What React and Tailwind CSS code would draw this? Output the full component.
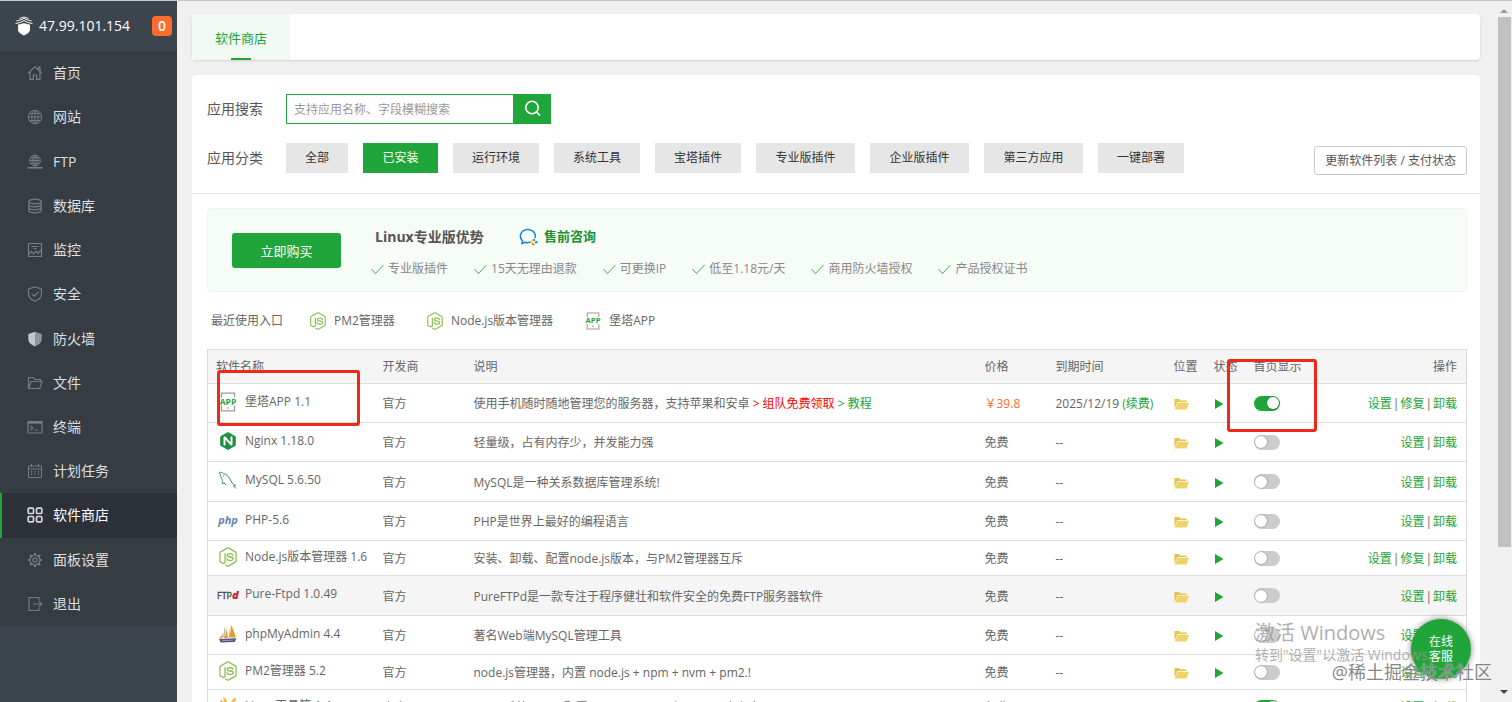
import { useState } from "react";
import { FaNodeJs } from "react-icons/fa";
import { SiNginx } from "react-icons/si";

const stroke = { fill: "none", stroke: "currentColor", strokeWidth: 1.2 };

// Sidebar icons, all on a 16x16 grid
const menuIcons = {
  home: <path {...stroke} d="M1 8.2 8 1.8l7 6.4M3 7v7.4h3.4V10h3.2v4.4H13V7M11.5 4.600V2.200H13V6" />,
  site: (
    <g {...stroke} strokeWidth={1}>
      <circle cx="8" cy="8" r="6.700" />
      <ellipse cx="8" cy="8" rx="3.200" ry="6.700" />
      <path d="M8 1.300v13.400M1.300 8h13.400M2.400 4.500h11.200M2.400 11.500h11.200" />
    </g>
  ),
  ftp: (
    <g {...stroke} strokeWidth={1}>
      <circle cx="8" cy="6.500" r="5.300" />
      <ellipse cx="8" cy="6.500" rx="2.500" ry="5.300" />
      <path d="M8 1.200v12M2.700 6.500h10.600M3.600 3.800h8.800M3.600 9.200h8.800" />
      <path d="M.5 13.800h15" strokeWidth={1.600} />
    </g>
  ),
  database: (
    <g {...stroke}>
      <ellipse cx="8" cy="3.500" rx="6.200" ry="2.300" />
      <path d="M1.800 3.500v9c0 1.300 2.800 2.300 6.200 2.300s6.200-1 6.200-2.300v-9M1.800 6.500c0 1.300 2.800 2.300 6.200 2.300s6.200-1 6.200-2.300M1.800 9.500c0 1.300 2.800 2.300 6.200 2.300s6.200-1 6.200-2.300" />
    </g>
  ),
  monitor: (
    <g {...stroke}>
      <path d="M1.500 1.500h13v13h-13zM4.500 4.500h7M6.500 6.500h3" />
      <path d="m2 12 2.500-2.500 2 2.500 2.500-3 2 2.500 3-3.500" />
    </g>
  ),
  security: (
    <g {...stroke}>
      <path d="M8 1 14.500 3v5c0 3.500-2.800 5.800-6.500 7.200C4.300 13.800 1.500 11.500 1.500 8V3z" />
      <path d="m4.800 7.700 2.500 2.500 4.200-4.400" />
    </g>
  ),
  firewall: (
    <g>
      <path fill="#c3c7c9" d="M8 .8 1.300 3v5c0 3.500 2.900 5.900 6.700 7.400z" />
      <path fill="#8f9598" d="M8 .8 14.700 3v5c0 3.500-2.900 5.900-6.700 7.400z" />
    </g>
  ),
  files: <path {...stroke} d="M1.500 13.500v-11h4.800L8 4.500h5.500v2M1.500 13.500 4 6.500h11l-2.300 7z" />,
  terminal: (
    <g {...stroke}>
      <path d="M1 2.500h14v11.500H1z" />
      <path d="M1 3.500h14" strokeWidth={2.400} />
      <path d="m3.500 7 2.300 2-2.300 2M7.500 11h3.500" />
    </g>
  ),
  cron: (
    <g {...stroke} strokeWidth={1}>
      <path d="M1.500 3h13v11.500h-13zM1.500 6h13M4.500 1v3M11.500 1v3" />
      <path d="M4.500 8v5M8 8v5M11.500 8v5" strokeDasharray="1.500 1" />
    </g>
  ),
  store: (
    <g {...stroke} strokeWidth={1.700}>
      <rect x="1.200" y="1.200" width="5.300" height="5.300" rx="1" />
      <rect x="9.500" y="1.200" width="5.300" height="5.300" rx="1" />
      <rect x="1.200" y="9.500" width="5.300" height="5.300" rx="1" />
      <rect x="9.500" y="9.500" width="5.300" height="5.300" rx="1" />
    </g>
  ),
  settings: (
    <g {...stroke}>
      <circle cx="8" cy="8" r="5" />
      <circle cx="8" cy="8" r="2.200" />
      <path strokeWidth={2} d="M8 1v2M8 13v2M1 8h2M13 8h2M3 3l1.500 1.500M11.500 11.500 13 13M3 13l1.500-1.500M11.500 4.500 13 3" />
    </g>
  ),
  exit: <path {...stroke} d="M12 4.500v-3H2v13h10v-3M6 8h8.500M12 5.300 14.700 8 12 10.700" />,
};

const menu = [
  { name: "首页", icon: "home" },
  { name: "网站", icon: "site" },
  { name: "FTP", icon: "ftp" },
  { name: "数据库", icon: "database" },
  { name: "监控", icon: "monitor" },
  { name: "安全", icon: "security" },
  { name: "防火墙", icon: "firewall" },
  { name: "文件", icon: "files" },
  { name: "终端", icon: "terminal" },
  { name: "计划任务", icon: "cron" },
  { name: "软件商店", icon: "store" },
  { name: "面板设置", icon: "settings" },
  { name: "退出", icon: "exit" },
];

const categories = [
  { name: "全部", width: "w-[62px]" },
  { name: "已安装", width: "w-[75px]" },
  { name: "运行环境", width: "w-[86px]" },
  { name: "系统工具", width: "w-[86px]" },
  { name: "宝塔插件", width: "w-[86px]" },
  { name: "专业版插件", width: "w-[99px]" },
  { name: "企业版插件", width: "w-[99px]" },
  { name: "第三方应用", width: "w-[99px]" },
  { name: "一键部署", width: "w-[86px]" },
];

const advantages = ["专业版插件", "15天无理由退款", "可更换IP", "低至1.18元/天", "商用防火墙授权", "产品授权证书"];

const software = [
  { name: "堡塔APP 1.1", icon: "app", height: "h-[39px]", desc: "使用手机随时随地管理您的服务器，支持苹果和安卓", price: "￥39.8", expire: "2025/12/19", repair: true, home: true, links: true },
  { name: "Nginx 1.18.0", icon: "nginx", height: "h-[39px]", desc: "轻量级，占有内存少，并发能力强" },
  { name: "MySQL 5.6.50", icon: "mysql", height: "h-10", desc: "MySQL是一种关系数据库管理系统!" },
  { name: "PHP-5.6", icon: "php", height: "h-[39px]", desc: "PHP是世界上最好的编程语言" },
  { name: "Node.js版本管理器 1.6", icon: "node", height: "h-[35px]", desc: "安装、卸载、配置node.js版本，与PM2管理器互斥", repair: true },
  { name: "Pure-Ftpd 1.0.49", icon: "ftpd", height: "h-10", desc: "PureFTPd是一款专注于程序健壮和软件安全的免费FTP服务器软件", active: true },
  { name: "phpMyAdmin 4.4", icon: "pma", height: "h-[39px]", desc: "著名Web端MySQL管理工具" },
  { name: "PM2管理器 5.2", icon: "node", height: "h-[35px]", desc: "node.js管理器，内置 node.js + npm + nvm + pm2.!" },
  { name: "Linux工具箱 1.4", icon: "tools", height: "h-[35px]", desc: "Linux系统工具，配置DNS、Swap、时区、IP、内存盘!", home: true },
];

function SoftIcon({ type, size = "size-5" }) {
  if (type === "node") return <FaNodeJs className={`${size} shrink-0 text-[#8cc152]`} />;
  if (type === "nginx") return <SiNginx className="size-[18px] shrink-0 text-[#1f9040]" />;
  if (type === "app")
    return (
      <svg viewBox="0 0 20 20" className={`${size} shrink-0 overflow-visible`}>
        <path d="M3.500 5.500V1.200h13v4.300M3.500 13.500v5.300h13v-5.300" fill="none" stroke="#999" strokeWidth="1.200" />
        <path d="M9 16h2" stroke="#999" />
        <text x="10" y="12.500" textAnchor="middle" fontSize="8.500" fontWeight="700" fill="#20a53a" fontFamily="Open Sans">APP</text>
      </svg>
    );
  if (type === "mysql")
    return (
      <svg viewBox="0 0 20 20" className="size-5 shrink-0" fill="none" stroke="#3f8296" strokeWidth="1">
        <path d="M4.500 10.500C3 8 2.500 5 1.500 2.500c1.500-.5 3 0 4 1 4 1 6.500 4.500 8 8.500.5 1.500 2.500 2.500 4 3.500l-2 .3 2.500 2.700" />
        <path d="M4.500 10.500c-.5 1.200-.3 2.500.3 3.500l1.200-1.500c.5 1.200 1.200 2 2 2.500M5 5.500l1 .8" />
      </svg>
    );
  if (type === "php")
    return (
      <svg viewBox="0 0 20 20" className="size-5 shrink-0 overflow-visible">
        <text x="10" y="14" textAnchor="middle" fontSize="11" fontWeight="700" fontStyle="italic" fill="#6482b9" fontFamily="Open Sans">php</text>
      </svg>
    );
  if (type === "ftpd")
    return (
      <svg viewBox="0 0 22 20" className="h-5 w-[22px] shrink-0">
        <text x="0" y="15" fontSize="9" fill="#444" stroke="#444" strokeWidth=".3" fontFamily="Open Sans">FTP</text>
        <text x="15" y="15" fontSize="11" fontWeight="800" fontStyle="italic" fill="#d0202a" fontFamily="Open Sans">d</text>
      </svg>
    );
  if (type === "pma")
    return (
      <svg viewBox="0 0 20 20" className="size-5 shrink-0">
        <path fill="#e8992f" d="M8.500 1.500c.5 5-.5 9-3 12.500h4.300zM13 1c2.500 4.500 3.800 8.500 4.800 12.500H11C12.300 9 12.800 5 13 1zM4.800 6c0 3.500-1 6-3.500 8.500h3z" />
        <path fill="#b9b9b9" d="M6 2.500c.5 3 0 7-1.500 10.500l1 .3C8 9.500 8 5 6 2.500zM11.500 3c.5 4 0 7.500-1.200 10.500h.9C12.500 10 12.500 6 11.500 3z" />
        <path fill="#55568c" d="m1 15 17.500-.8-1.800 3.800-14 .6z" />
        <path fill="#aaa" d="m4 16.300 11-.5v.8l-10.500.5z" />
      </svg>
    );
  return (
    <svg viewBox="0 0 20 20" className="size-5 shrink-0" fill="#f5b93a">
      <path d="M3 3.500 5 6l1-2.500L4.500 1.800c2-.5 4 .7 4 3l8 9.500c1 1.700-1 3.500-2.600 2.500L5 8.500C3 8.500 1.800 6 3 3.500z" />
      <path d="m12 7.500 3.500-5L18 2l-.5 2.500-4 4.500zM3 16l5-5 1.800 1.800-4.500 5C4 18.500 2 17.500 3 16z" />
    </svg>
  );
}

function Check() {
  return (
    <svg viewBox="0 0 13 12" className="h-3 w-[13px]" fill="none" stroke="#3fae58">
      <path d="m.5 6 4 4.500 8-8.500" />
    </svg>
  );
}

function SoftRow({ item }) {
  const [home, setHome] = useState(!!item.home);
  const actions = item.repair ? ["设置", "修复", "卸载"] : ["设置", "卸载"];

  return (
    <tr className={`border-y border-[#ddd] ${item.height} ${item.active ? "bg-[#f5f5f5]" : "bg-white"}`}>
      <td className="pb-[3px] pl-2">
        <div className="flex items-center">
          <span className="mr-[5px] flex w-6 justify-center">
            <SoftIcon type={item.icon} />
          </span>
          <span className="whitespace-nowrap">{item.name}</span>
        </div>
      </td>
      <td className="pt-[2px] pl-2">官方</td>
      <td className="truncate pt-[2px] pl-2">
        {item.desc}
        {item.links && (
          <>
            {" "}
            <a href="#team" className="text-[#f00]">&gt; 组队免费领取</a>{" "}
            <a href="#guide" className="text-[#20a53a]">&gt; 教程</a>
          </>
        )}
      </td>
      <td className={`pt-[2px] pl-2 ${item.price ? "text-[#fc6d26]" : ""}`}>{item.price || "免费"}</td>
      <td className="pt-[2px] pl-2 whitespace-nowrap">
        {item.expire || "--"} {item.expire && <a href="#renew" className="text-[#20a53a]">(续费)</a>}
      </td>
      <td className="pt-[2px] pl-2">
        <button aria-label="打开目录" className="block">
          <svg viewBox="0 0 15 12" className="h-3 w-[15px]">
            <path fill="#e6c24c" d="M.5 11V1h4.500l1.300 1.400h6.200V4H3.500z" />
            <path fill="#efd368" d="M3.800 4.800H15L12.500 11.500H.8z" />
          </svg>
        </button>
      </td>
      <td className="pt-[2px] pl-2">
        <button aria-label="运行中" className="block">
          <svg viewBox="0 0 10 10" className="size-[10px]" fill="#20a53a">
            <path d="M1 0v10l8.500-5z" />
          </svg>
        </button>
      </td>
      <td className="pl-2">
        <input
          type="checkbox"
          aria-label={`${item.name} 首页显示`}
          checked={home}
          onChange={(e) => setHome(e.target.checked)}
          className="flex h-[15px] w-[26px] appearance-none items-center rounded-full bg-[#ccc] px-px before:size-3 before:rounded-full before:bg-white before:shadow-[0_0_2px_rgba(0,0,0,0.4)] checked:justify-end checked:bg-[#20a53a]"
        />
      </td>
      <td className="pt-[2px] pr-[9px]">
        <div className="flex justify-end gap-px">
          {actions.map((a, i) => (
            <span key={a} className="flex gap-px">
              {i > 0 && <span>|</span>}
              <a href={`#${a}`} className="text-[#20a53a]">{a}</a>
            </span>
          ))}
        </div>
      </td>
    </tr>
  );
}

function Sidebar() {
  return (
    <aside className="w-[177px] shrink-0 bg-[#3c444d] text-white">
      <div className="flex h-[50px] items-center pr-[5px] pl-[15px]">
        <svg viewBox="0 0 18 20" className="mr-[6px] h-5 w-[18px]" fill="#fff">
          <path d="M3 8.500c3-.5 4.500-.8 6-1.500 1.500.7 3 1 6 1.500v5c0 3-3 4.500-6 6-3-1.500-6-3-6-6z" />
          <path fill="none" stroke="#fff" strokeWidth="1" d="M.5 7.500C4 7 6.500 6 9 4.500c2.500 1.500 5 2.500 8.500 3M1.500 4.800C4.500 4.300 7 3.500 9 2.300c2 1.200 4.500 2 7.500 2.500M4.500 2.300C6.500 2 8 1.500 9 .8c1 .7 2.500 1.200 4.500 1.500" />
        </svg>
        <span className="text-sm">47.99.101.154</span>
        <span className="ml-auto flex size-5 items-center justify-center rounded bg-[#ff6c2c] text-sm font-semibold">0</span>
      </div>
      <nav>
        <ul className="flex h-[575px] flex-col bg-[#353d43]">
          {menu.map((m) => {
            const current = m.icon === "store";
            return (
              <li key={m.icon} className="flex-1">
                <a
                  href={`#${m.icon}`}
                  className={`flex h-full items-center border-l-2 pl-[25px] text-sm ${
                    current ? "border-[#20a53a] bg-[#2c3138] text-white" : "border-transparent text-[#dcdfe0]"
                  }`}
                >
                  <svg viewBox="0 0 16 16" className={`mr-[10px] size-4 ${current ? "text-[#d5d8da]" : "text-[#757d81]"}`}>
                    {menuIcons[m.icon]}
                  </svg>
                  {m.name}
                </a>
              </li>
            );
          })}
        </ul>
      </nav>
    </aside>
  );
}

function App() {
  const [category, setCategory] = useState("已安装");
  const [keyword, setKeyword] = useState("");

  return (
    <div className="relative flex h-screen overflow-hidden border-t border-[#c4c8cb] bg-[#f0f0f0] font-['Open_Sans','Noto_Sans_CJK_SC',sans-serif] text-xs text-[#666]">
      <Sidebar />

      <main className="min-w-0 flex-1 overflow-y-auto pt-[13px] pr-4 pl-[15px] [scrollbar-width:none]">
        <div className="flex h-[46px] rounded bg-white shadow-sm">
          <a href="#store" className="flex w-[98px] flex-col items-center justify-between bg-[#f1f9f3] pt-[14px] text-[13px] leading-5 text-[#20a53a]">
            软件商店
            <span className="h-[2px] w-5 bg-[#20a53a]" />
          </a>
        </div>

        <div className="mt-[15px] rounded bg-white">
          <div className="border-b border-[#e4e4e4] pt-[19px] pr-[13px] pb-5 pl-[15px]">
            <form className="flex items-center" onSubmit={(e) => e.preventDefault()}>
              <label htmlFor="search" className="w-[79px] text-sm text-[#555]">应用搜索</label>
              <input
                id="search"
                type="text"
                value={keyword}
                onChange={(e) => setKeyword(e.target.value)}
                placeholder="支持应用名称、字段模糊搜索"
                className="h-[30px] w-[228px] border border-[#20a53a] px-[7px] outline-none placeholder:text-[#999]"
              />
              <button aria-label="搜索" className="flex h-[30px] w-[37px] items-center justify-center bg-[#20a53a]">
                <svg viewBox="0 0 18 18" className="size-[18px]" fill="none" stroke="#fff" strokeWidth="1.600">
                  <circle cx="8" cy="7.500" r="6.200" />
                  <path d="m12.500 12 3.500 3.500" />
                </svg>
              </button>
            </form>
            <div className="mt-[19px] flex h-[30px] items-start">
              <span className="w-[79px] text-sm leading-[30px] text-[#555]">应用分类</span>
              <div className="flex gap-[15px]">
                {categories.map((c) => (
                  <button
                    key={c.name}
                    onClick={() => setCategory(c.name)}
                    className={`h-[30px] ${c.width} ${category === c.name ? "bg-[#20a53a] text-white" : "bg-[#e6e6e6] text-[#333]"}`}
                  >
                    {c.name}
                  </button>
                ))}
              </div>
              <button className="mt-[3px] ml-auto h-[29px] rounded-[3px] border border-[#ccc] px-[10px] text-[#555]">
                更新软件列表 / 支付状态
              </button>
            </div>
          </div>

          <div className="pt-[14px] pr-[13px] pl-[15px]">
            <div className="flex h-[84px] items-center rounded border border-[#edf5ee] bg-[#f6fcf6] pl-6">
              <button className="h-[35px] w-[109px] rounded-[3px] bg-[#20a53a] pt-[3px] text-[13px] text-white">立即购买</button>
              <div className="ml-[30px] pt-1">
                <div className="flex items-center pl-1">
                  <span className="w-[144px] text-sm font-bold text-[#555]">Linux专业版优势</span>
                  <a href="#consult" className="flex items-center gap-[6px] text-[13px] font-bold text-[#1c8f33]">
                    <svg viewBox="0 0 19 18" className="h-[18px] w-[19px]" fill="none" strokeLinecap="round">
                      <path stroke="#1a7fe8" strokeWidth="1.500" d="M11 14.300c-1.600.5-3.400.5-5 0L3 15.500l.4-2.700C-.5 9 1.500 2 8.300 1.500 14 1.300 17.200 5.500 16 9.500" />
                      <path stroke="#fb6500" strokeWidth="2" d="m14 16 .5.500" />
                      <path stroke="#ffcc00" strokeWidth="2" d="m12.300 13.800.5-.5" />
                      <path stroke="#2dbc00" strokeWidth="2" d="m14.800 11.800.4.400" />
                      <path stroke="#0082ef" strokeWidth="2" d="m17.500 14-.5.500" />
                    </svg>
                    售前咨询
                  </a>
                </div>
                <ul className="mt-[14px] flex gap-[26px] text-[#888]">
                  {advantages.map((a) => (
                    <li key={a} className="flex items-center gap-1">
                      <Check />
                      {a}
                    </li>
                  ))}
                </ul>
              </div>
            </div>

            <div className="flex h-[57px] items-center pl-1">
              <span className="w-[98px]">最近使用入口</span>
              <a href="#pm2" className="mr-[31px] flex items-center gap-[7px]">
                <SoftIcon type="node" size="size-[18px]" />
                PM2管理器
              </a>
              <a href="#node" className="mr-[31px] flex items-center gap-[7px]">
                <SoftIcon type="node" size="size-[18px]" />
                Node.js版本管理器
              </a>
              <a href="#app" className="flex items-center gap-[7px]">
                <SoftIcon type="app" size="size-[18px]" />
                堡塔APP
              </a>
            </div>

            <div className="relative">
              <table className="w-full table-fixed border-collapse border border-[#ddd]">
                <thead>
                  <tr className="h-[34px] bg-[#f5f5f5] text-left">
                    <th className="w-[167px] pl-2 font-normal">软件名称</th>
                    <th className="w-[91px] pl-2 font-normal">开发商</th>
                    <th className="pl-2 font-normal">说明</th>
                    <th className="w-[71px] pl-2 font-normal">价格</th>
                    <th className="w-[118px] pl-2 font-normal">到期时间</th>
                    <th className="w-10 pl-2 font-normal">位置</th>
                    <th className="w-10 pl-2 font-normal">状态</th>
                    <th className="w-[90px] pl-2 font-normal">首页显示</th>
                    <th className="w-[131px] pr-[9px] text-right font-normal">操作</th>
                  </tr>
                </thead>
                <tbody>
                  {software.map((s) => (
                    <SoftRow key={s.name} item={s} />
                  ))}
                </tbody>
              </table>
              {/* highlight marks */}
              <div className="pointer-events-none absolute top-[21px] left-[10px] h-14 w-[143px] rounded-[3px] border-3 border-[#f0281a]" />
              <div className="pointer-events-none absolute top-[10px] right-[150px] h-[73px] w-[90px] rounded-[3px] border-3 border-[#f0281a]" />
            </div>
          </div>
        </div>
      </main>

      {/* scroll bar */}
      <div className="flex w-4 shrink-0 flex-col items-center py-2">
        <svg viewBox="0 0 8 4" className="h-1 w-2" fill="#999">
          <path d="M0 4h8L4 0z" />
        </svg>
        <div className="mt-1 h-[530px] w-[13px] bg-[#c1c1c1]" />
        <svg viewBox="0 0 8 4" className="mt-auto h-1 w-2" fill="#444">
          <path d="M0 0h8L4 4z" />
        </svg>
      </div>

      <button className="absolute right-[41px] bottom-[23px] size-[60px] rounded-full bg-[#20a53a] px-4 text-xs leading-[15px] text-white shadow-[0_0_6px_rgba(0,0,0,0.5)]">
        在线客服
      </button>
      <div className="pointer-events-none absolute right-[79px] bottom-[37px] w-[178px] whitespace-nowrap text-[#999]/80">
        <p className="text-xl leading-6">激活 Windows</p>
        <p className="text-sm leading-5">转到"设置"以激活 Windows。</p>
      </div>
      <p className="pointer-events-none absolute right-5 bottom-[18px] text-lg leading-6 text-[#666]/80 [text-shadow:0_0_1px_#fff]">@稀土掘金技术社区</p>
    </div>
  );
}

export default App;
